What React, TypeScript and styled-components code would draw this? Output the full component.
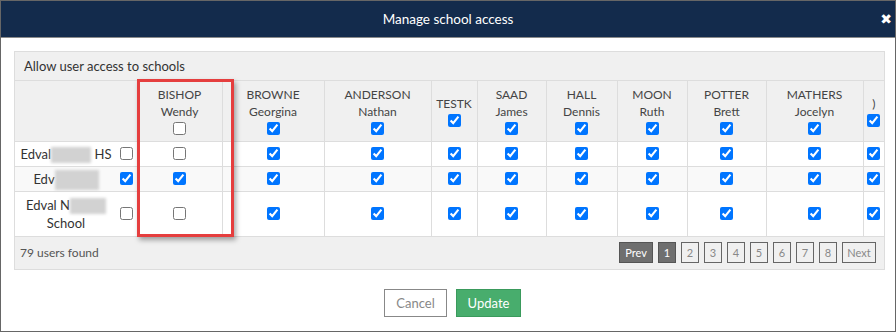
import React from "react";
import styled, { createGlobalStyle } from "styled-components";

const Global = createGlobalStyle`
  html, body { margin: 0; padding: 0; background: #fff; }
  body { font-family: Lato, "Open Sans", "Liberation Sans", sans-serif; }
  * { box-sizing: border-box; }
`;

const Modal = styled.div`
  width: 896px;
  height: 332px;
  border: 1px solid #666;
  background: #fff;
  display: flex;
  flex-direction: column;
`;

const TitleBar = styled.div`
  height: 37px;
  background: #132b4c;
  border-bottom: 1px solid #8a8a8a;
  display: grid;
  grid-template-columns: 1fr auto 1fr;
  align-items: center;
  color: #fff;
`;

const Title = styled.div`
  grid-column: 2;
  font-size: 13.5px;
`;

const Close = styled.span`
  grid-column: 3;
  justify-self: end;
  margin-right: 3px;
  font-family: "DejaVu Sans", sans-serif;
  font-size: 14px;
  font-weight: bold;
`;

const Body = styled.div`
  padding: 13px 10px 0 13px;
`;

const Panel = styled.div`
  position: relative;
  border: 1px solid #ddd;
`;

const PanelHeading = styled.div`
  height: 29px;
  line-height: 28px;
  padding-left: 9px;
  background: #f0f0f0;
  border-bottom: 1px solid #ddd;
  font-size: 13px;
  color: #333;
`;

const Table = styled.table`
  width: 100%;
  border-collapse: collapse;
  table-layout: fixed;
`;

const Col = styled.col<{ $w: number }>`
  width: ${(p) => p.$w}px;
`;

const HeadCell = styled.th`
  height: 60px;
  padding: 0 2px;
  background: #f0f0f0;
  border-left: 1px solid #ddd;
  border-bottom: 1px solid #ddd;
  font-weight: normal;
  font-size: 12px;
  line-height: 17px;
  color: #444;
  text-align: center;
  vertical-align: middle;
  &:first-child { border-left: none; }
`;

const Row = styled.tr<{ $alt?: boolean; $tall?: boolean }>`
  background: ${(p) => (p.$alt ? "#f9f9f9" : "#fff")};
  & > td { padding: ${(p) => (p.$tall ? "4px 2px" : "3px 2px")}; }
`;

const Cell = styled.td<{ $noLeft?: boolean }>`
  border-left: ${(p) => (p.$noLeft ? "none" : "1px solid #ddd")};
  border-bottom: 1px solid #ddd;
  text-align: center;
  vertical-align: middle;
  font-size: 13px;
  line-height: 18px;
  color: #333;
  &:first-child { border-left: none; }
`;

const Check = styled.input.attrs({ type: "checkbox" })`
  display: block;
  width: 13px;
  height: 13px;
  margin: 0 auto;
`;

const HeadCheck = styled(Check)`
  margin-top: 2px;
`;

const Blur = styled.span<{ $w: number; $h: number }>`
  display: inline-block;
  width: ${(p) => p.$w}px;
  height: ${(p) => p.$h}px;
  margin: -3px 0;
  vertical-align: middle;
  background: #d2d2d2;
  filter: blur(1.5px);
`;

const Footer = styled.div`
  height: 32px;
  background: #f0f0f0;
  display: flex;
  align-items: center;
  justify-content: space-between;
  padding: 0 8px 0 5px;
`;

const Count = styled.span`
  font-size: 12px;
  color: #555;
`;

const Pager = styled.div`
  display: flex;
  gap: 5px;
`;

const PageBtn = styled.span<{ $active?: boolean; $wide?: boolean }>`
  height: 21px;
  min-width: ${(p) => (p.$wide ? 34 : 18)}px;
  display: flex;
  align-items: center;
  justify-content: center;
  font-size: 11px;
  border: 1px solid ${(p) => (p.$active ? "#555" : "#666")};
  background: ${(p) => (p.$active ? "#6f6f6f" : "#f0f0f0")};
  color: ${(p) => (p.$active ? "#fff" : "#888")};
`;

const Highlight = styled.div`
  position: absolute;
  left: 122px;
  top: 27px;
  width: 97px;
  height: 158px;
  border: 3px solid #e53e3e;
  box-shadow: 2px 3px 5px rgba(0, 0, 0, 0.35);
  pointer-events: none;
`;

const Actions = styled.div`
  display: flex;
  justify-content: center;
  gap: 9px;
  margin-top: 19px;
  padding-left: 6px;
`;

const Button = styled.button<{ $primary?: boolean }>`
  height: 28px;
  width: ${(p) => (p.$primary ? 65 : 63)}px;
  font-family: inherit;
  font-size: 13px;
  border: 1px solid ${(p) => (p.$primary ? "#3a9a5c" : "#888")};
  background: ${(p) => (p.$primary ? "#48ad6d" : "#fff")};
  color: ${(p) => (p.$primary ? "#fff" : "#888")};
  padding: 0;
`;

const widths = [102, 20, 85, 102, 107, 46, 69, 71, 70, 79, 97, 21];

const teachers = [
  { last: "BISHOP", first: "Wendy", on: false },
  { last: "BROWNE", first: "Georgina", on: true },
  { last: "ANDERSON", first: "Nathan", on: true },
  { last: "TESTK", first: "", on: true },
  { last: "SAAD", first: "James", on: true },
  { last: "HALL", first: "Dennis", on: true },
  { last: "MOON", first: "Ruth", on: true },
  { last: "POTTER", first: "Brett", on: true },
  { last: "MATHERS", first: "Jocelyn", on: true },
  { last: ")", first: "", on: true },
];

const schools = [
  {
    name: (
      <>
        Edval<Blur $w={40} $h={16} /> HS
      </>
    ),
    self: false,
    tall: false,
    access: [false, true, true, true, true, true, true, true, true, true],
  },
  {
    name: (
      <>
        Edv<Blur $w={44} $h={20} />
      </>
    ),
    self: true,
    tall: false,
    access: [true, true, true, true, true, true, true, true, true, true],
  },
  {
    name: (
      <>
        Edval N<Blur $w={36} $h={16} />
        <br />
        School
      </>
    ),
    self: false,
    tall: true,
    access: [false, true, true, true, true, true, true, true, true, true],
  },
];

export default function App() {
  return (
    <>
      <Global />
      <Modal>
        <TitleBar>
          <Title>Manage school access</Title>
          <Close>✖</Close>
        </TitleBar>
        <Body>
          <Panel>
            <PanelHeading>Allow user access to schools</PanelHeading>
            <Table>
              <colgroup>
                {widths.map((w, i) => (
                  <Col key={i} $w={w} />
                ))}
              </colgroup>
              <thead>
                <tr>
                  <HeadCell colSpan={2} />
                  {teachers.map((t, i) => (
                    <HeadCell key={i}>
                      <div>{t.last}</div>
                      {t.first && <div>{t.first}</div>}
                      <HeadCheck defaultChecked={t.on} />
                    </HeadCell>
                  ))}
                </tr>
              </thead>
              <tbody>
                {schools.map((s, r) => (
                  <Row key={r} $alt={r === 1} $tall={s.tall}>
                    <Cell>{s.name}</Cell>
                    <Cell $noLeft>
                      <Check defaultChecked={s.self} />
                    </Cell>
                    {s.access.map((a, i) => (
                      <Cell key={i}>
                        <Check defaultChecked={a} />
                      </Cell>
                    ))}
                  </Row>
                ))}
              </tbody>
            </Table>
            <Footer>
              <Count>79 users found</Count>
              <Pager>
                <PageBtn $active $wide>Prev</PageBtn>
                <PageBtn $active>1</PageBtn>
                {[2, 3, 4, 5, 6, 7, 8].map((n) => (
                  <PageBtn key={n}>{n}</PageBtn>
                ))}
                <PageBtn $wide>Next</PageBtn>
              </Pager>
            </Footer>
            <Highlight />
          </Panel>
          <Actions>
            <Button>Cancel</Button>
            <Button $primary>Update</Button>
          </Actions>
        </Body>
      </Modal>
    </>
  );
}
